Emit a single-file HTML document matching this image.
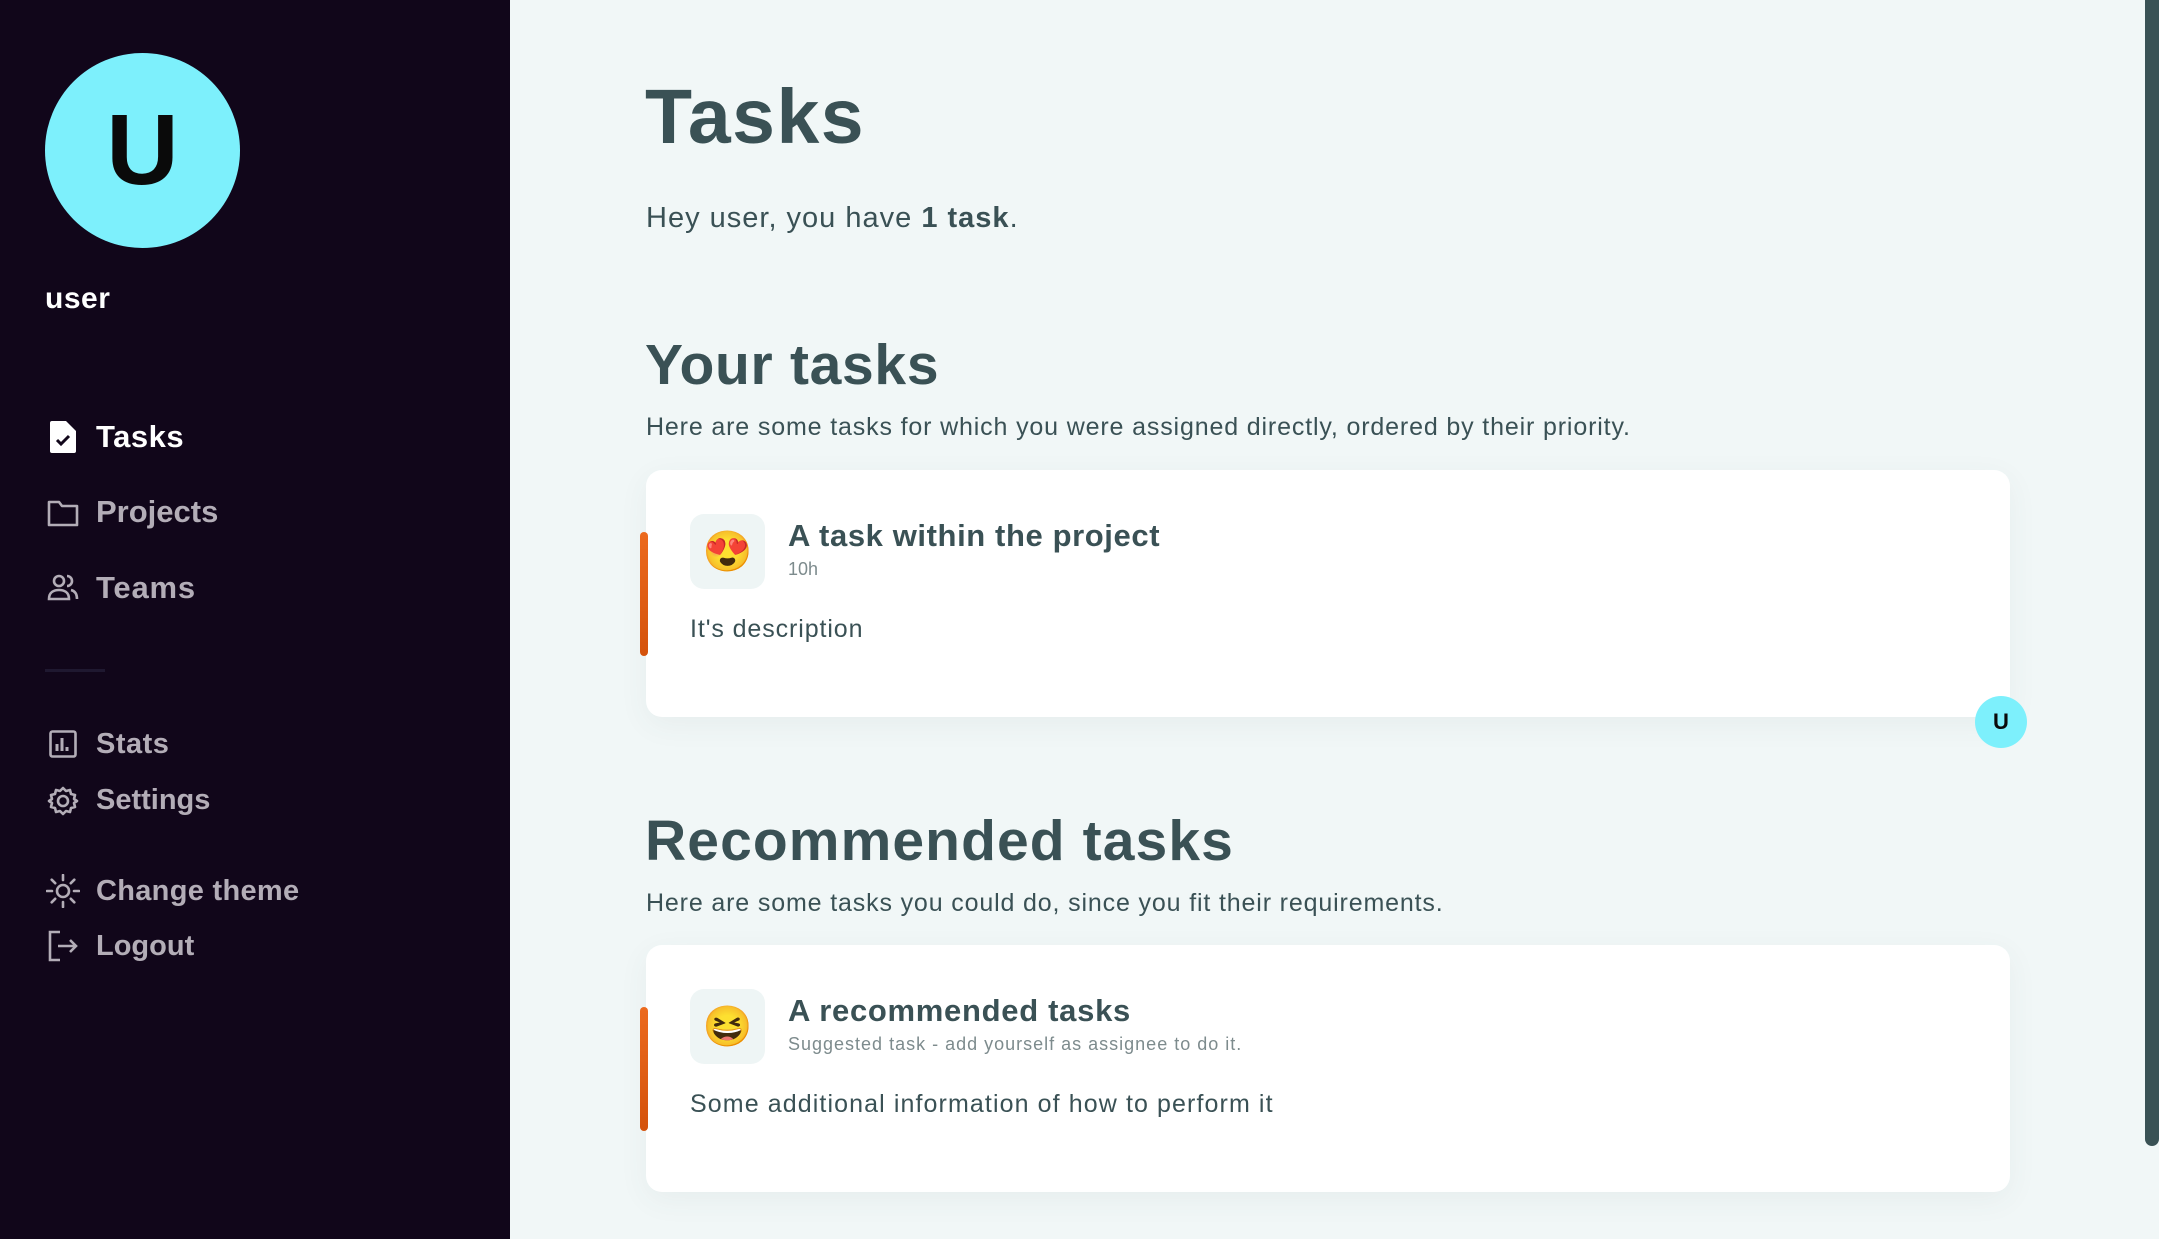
<!DOCTYPE html>
<html><head><meta charset="utf-8"><style>
*{margin:0;padding:0;box-sizing:border-box}
body{width:2159px;height:1239px;overflow:hidden;background:#f1f7f7;font-family:"Liberation Sans",sans-serif;color:#3a5155;position:relative}
.a{position:absolute;line-height:1;white-space:nowrap}
#side{position:absolute;left:0;top:0;width:510px;height:1239px;background:#11061a}
.nav{color:#b3adb7;font-weight:bold}
.card{position:absolute;left:646px;width:1364px;height:247px;background:#fff;border-radius:16px;box-shadow:0 8px 30px rgba(60,90,90,0.06)}
.bar{position:absolute;left:640px;width:8px;height:124px;border-radius:4px;background:linear-gradient(#ec6a1e,#d4520b)}
.emo{position:absolute;left:44px;top:44px;width:75px;height:75px;border-radius:14px;background:#eef5f5;font-size:40px;display:flex;align-items:center;justify-content:center;font-family:"Noto Color Emoji","DejaVu Sans",sans-serif}
</style></head><body>
<div id="side">
 <div style="position:absolute;left:45px;top:53px;width:195px;height:195px;border-radius:50%;background:#7df0fc;color:#0a0a0a;font-weight:bold;font-size:100px;display:flex;align-items:center;justify-content:center">U</div>
 <div class="a" style="left:45px;top:284px;font-size:30px;font-weight:bold;color:#fff;letter-spacing:0.5px">user</div>
 <svg style="position:absolute;left:50px;top:421px" width="26" height="32" viewBox="0 0 26 32"><path d="M2 0h14l10 10v20a2 2 0 0 1-2 2H2a2 2 0 0 1-2-2V2a2 2 0 0 1 2-2z" fill="#fff"/><path d="M7 19l4 4 8-8" stroke="#11061a" stroke-width="3" fill="none"/></svg>
 <div class="a" style="left:96px;top:421px;font-size:31px;font-weight:bold;color:#fff;letter-spacing:0.5px">Tasks</div>
 <svg style="position:absolute;left:47px;top:499px" width="32" height="28" viewBox="0 0 32 28"><path d="M2 3h10l3 4h15v19H2z" fill="none" stroke="#b3adb7" stroke-width="2.6" stroke-linejoin="round"/></svg>
 <div class="a nav" style="left:96px;top:496px;font-size:31px">Projects</div>
 <svg style="position:absolute;left:47px;top:573px" width="32" height="28" viewBox="0 0 32 28"><circle cx="12" cy="8" r="5" fill="none" stroke="#b3adb7" stroke-width="2.6"/><path d="M2 26c0-7 5-9 10-9s10 2 10 9z" fill="none" stroke="#b3adb7" stroke-width="2.6"/><path d="M20 3a5 5 0 0 1 0 10M24 17c4 1 6 4 6 9" fill="none" stroke="#b3adb7" stroke-width="2.6"/></svg>
 <div class="a nav" style="left:96px;top:572px;font-size:31px;letter-spacing:0.8px">Teams</div>
 <div style="position:absolute;left:45px;top:669px;width:60px;height:3px;background:#1f1830"></div>
 <svg style="position:absolute;left:49px;top:730px" width="28" height="28" viewBox="0 0 28 28"><rect x="1.5" y="1.5" width="25" height="25" rx="2" fill="none" stroke="#b3adb7" stroke-width="2.6"/><path d="M8 21v-7M13 21V8M18 21v-4" stroke="#b3adb7" stroke-width="3"/></svg>
 <div class="a nav" style="left:96px;top:730px;font-size:29px;letter-spacing:0.5px">Stats</div>
 <svg style="position:absolute;left:47px;top:785px" width="32" height="32" viewBox="0 0 32 32"><circle cx="16" cy="16" r="5" fill="none" stroke="#b3adb7" stroke-width="2.6"/><path d="M16 3l3 3 4-1 1 4 4 1-1 4 3 2-3 2 1 4-4 1-1 4-4-1-3 3-3-3-4 1-1-4-4-1 1-4-3-2 3-2-1-4 4-1 1-4 4 1z" fill="none" stroke="#b3adb7" stroke-width="2.6" stroke-linejoin="round"/></svg>
 <div class="a nav" style="left:96px;top:786px;font-size:29px">Settings</div>
 <svg style="position:absolute;left:46px;top:874px" width="34" height="34" viewBox="0 0 34 34"><circle cx="17" cy="17" r="6" fill="none" stroke="#b3adb7" stroke-width="2.6"/><path d="M17 1v5M17 28v5M1 17h5M28 17h5M5.7 5.7l3.5 3.5M24.8 24.8l3.5 3.5M5.7 28.3l3.5-3.5M24.8 9.2l3.5-3.5" stroke="#b3adb7" stroke-width="2.6" stroke-linecap="round"/></svg>
 <div class="a nav" style="left:96px;top:877px;font-size:29px;letter-spacing:0.3px">Change theme</div>
 <svg style="position:absolute;left:48px;top:930px" width="32" height="32" viewBox="0 0 32 32"><path d="M12 2H2v28h10" fill="none" stroke="#b3adb7" stroke-width="2.6"/><path d="M10 16h18M22 10l6 6-6 6" fill="none" stroke="#b3adb7" stroke-width="2.6"/></svg>
 <div class="a nav" style="left:96px;top:932px;font-size:29px">Logout</div>
</div>

<div class="a" style="left:645px;top:79px;font-size:77px;font-weight:bold;letter-spacing:1.5px">Tasks</div>
<div class="a" style="left:646px;top:204px;font-size:29px;letter-spacing:1px">Hey user, you have <b>1 task</b>.</div>
<div class="a" style="left:645px;top:337px;font-size:57px;font-weight:bold;letter-spacing:0.7px">Your tasks</div>
<div class="a" style="left:646px;top:415px;font-size:25px;letter-spacing:0.85px">Here are some tasks for which you were assigned directly, ordered by their priority.</div>

<div class="card" style="top:470px">
 <div class="emo">😍</div>
 <div class="a" style="left:142px;top:50px;font-size:31px;font-weight:bold;letter-spacing:0.6px">A task within the project</div>
 <div class="a" style="left:142px;top:90px;font-size:18px;color:#7d8b8d">10h</div>
 <div class="a" style="left:44px;top:147px;font-size:25px;letter-spacing:0.9px">It's description</div>
</div>
<div class="bar" style="top:532px"></div>
<div style="position:absolute;left:1975px;top:696px;width:52px;height:52px;border-radius:50%;background:#7df0fc;color:#0a0a0a;font-weight:bold;font-size:22px;display:flex;align-items:center;justify-content:center">U</div>

<div class="a" style="left:645px;top:813px;font-size:57px;font-weight:bold;letter-spacing:1.1px">Recommended tasks</div>
<div class="a" style="left:646px;top:891px;font-size:25px;letter-spacing:0.85px">Here are some tasks you could do, since you fit their requirements.</div>

<div class="card" style="top:945px">
 <div class="emo">😆</div>
 <div class="a" style="left:142px;top:50px;font-size:31px;font-weight:bold;letter-spacing:0.7px">A recommended tasks</div>
 <div class="a" style="left:142px;top:90px;font-size:18px;color:#7d8b8d;letter-spacing:1px">Suggested task - add yourself as assignee to do it.</div>
 <div class="a" style="left:44px;top:147px;font-size:25px;letter-spacing:1.1px">Some additional information of how to perform it</div>
</div>
<div class="bar" style="top:1007px"></div>

<div style="position:absolute;left:2145px;top:0;width:14px;height:1146px;background:#3a5255;border-radius:0 0 7px 7px"></div>
</body></html>
